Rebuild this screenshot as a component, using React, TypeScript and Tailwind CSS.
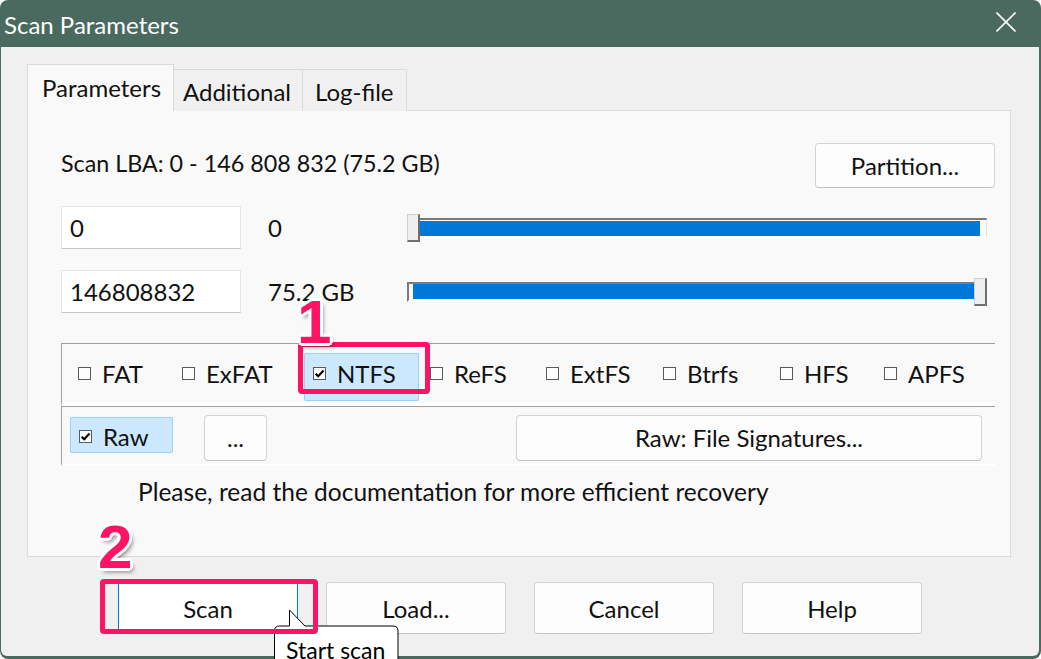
import React from 'react';

function Check({ checked }: { checked?: boolean }) {
  return (
    <span className="w-[13px] h-[13px] shrink-0 border border-[#5a5a5a] bg-[#fcfcfc] flex items-center justify-center">
      {checked && (
        <svg viewBox="0 0 12 12" className="w-[11px] h-[11px]">
          <path d="M1.8 6.2 L4.6 9 L10.4 2.8" stroke="#000" strokeWidth="2.4" fill="none" />
        </svg>
      )}
    </span>
  );
}

function FsItem({ label, width, checked, active }: { label: string; width: string; checked?: boolean; active?: boolean }) {
  return (
    <div className={width}>
      <div
        className={
          'h-[48px] flex items-center gap-[11px] pl-[9px] pb-[7px] rounded-[2px] ' +
          (active ? 'w-[115px] bg-[#cce8ff] shadow-[inset_0_0_0_1px_#99d1ff]' : '')
        }
      >
        <Check checked={checked} />
        <span>{label}</span>
      </div>
    </div>
  );
}

function Btn({ children, className }: { children: React.ReactNode; className?: string }) {
  return (
    <div
      className={
        'flex items-center justify-center bg-[#fdfdfd] border border-[#d3d3d3] border-b-[#c2c2c2] rounded-[4px] ' +
        (className ?? '')
      }
    >
      {children}
    </div>
  );
}

const digit =
  "absolute font-['Liberation_Sans',Arial,sans-serif] font-bold text-[62px] leading-[62px] text-[#ff1464] [text-shadow:-2px_-2px_0_#fff,2px_-2px_0_#fff,-2px_2px_0_#fff,2px_2px_0_#fff,0_-3px_0_#fff,0_3px_0_#fff,-3px_0_0_#fff,3px_0_0_#fff,3px_4px_4px_rgba(0,0,0,0.45)]";

export default function App() {
  return (
    <div className="w-[1041px] h-[659px] bg-white overflow-hidden">
      <div className="relative w-full h-full flex flex-col rounded-[8px] bg-[#4a6a60] pl-[1px] pr-[2px] pb-[3px] font-['Lato','Noto_Sans',sans-serif] text-[24px] text-[#111]">
        {/* title bar */}
        <div className="h-[47px] shrink-0 flex items-center justify-between text-white">
          <span className="pl-[3px] pt-[2px]">Scan Parameters</span>
          <svg viewBox="0 0 20 20" className="w-[20px] h-[20px] mr-[23px] mb-[4px]">
            <path d="M0.5 0.5 L19.5 19.5 M19.5 0.5 L0.5 19.5" stroke="#fff" strokeWidth="1.6" />
          </svg>
        </div>

        {/* body */}
        <div className="flex-1 bg-[#f0f0f0] rounded-b-[6px] flex flex-col pl-[26px] pt-[17px]">
          {/* tabs */}
          <div className="flex items-end h-[47px] relative z-10 -mb-px">
            <div className="w-[147px] h-[47px] bg-[#f9f9f9] border border-b-0 border-[#dadada] flex items-center pl-[14px] pb-[1px]">
              Parameters
            </div>
            <div className="w-[129px] h-[42px] bg-[#f0f0f0] border-t border-r border-[#dadada] flex items-center pl-[9px] pt-[3px]">
              Additional
            </div>
            <div className="w-[104px] h-[42px] bg-[#f0f0f0] border-t border-r border-[#dadada] flex items-center pl-[12px] pt-[3px]">
              Log-file
            </div>
          </div>

          {/* panel */}
          <div className="w-[984px] h-[447px] bg-[#f9f9f9] border border-[#dadada] pl-[33px] pr-[15px] pt-[32px] flex flex-col">
            <div className="h-[45px] flex items-center justify-between">
              <span className="pb-[4px] text-[23.3px]">Scan LBA: 0 - 146 808 832 (75.2 GB)</span>
              <Btn className="w-[180px] h-[45px]">Partition...</Btn>
            </div>

            {/* start row */}
            <div className="mt-[18px] h-[43px] flex items-center">
              <div className="w-[180px] h-[43px] bg-white border border-[#e6e6e6] border-b-[#c4c4c4] flex items-center pl-[8px]">0</div>
              <div className="w-[166px] pl-[27px]">0</div>
              <div className="w-[580px] h-[28px] flex items-center">
                <div className="w-[13px] h-[28px] bg-[#efefef] border border-[#cfcfcf] border-r-2 border-b-2 border-r-[#6f6f6f] border-b-[#6f6f6f]" />
                <div className="flex-1 h-[20px] border-t-2 border-t-[#7a7a7a] border-r border-r-[#e0e0e0] border-b-2 border-b-white pr-[6px] pt-px">
                  <div className="h-[15px] bg-[#0078d7]" />
                </div>
              </div>
            </div>

            {/* end row */}
            <div className="mt-[21px] h-[43px] flex items-center">
              <div className="w-[180px] h-[43px] bg-white border border-[#e6e6e6] border-b-[#c4c4c4] flex items-center pl-[8px]">146808832</div>
              <div className="w-[166px] pl-[27px]">75.2 GB</div>
              <div className="w-[580px] h-[28px] flex items-center">
                <div className="flex-1 h-[20px] border-t-2 border-l-2 border-[#7a7a7a] border-b-2 border-b-white pl-[4px]">
                  <div className="h-[15px] bg-[#0078d7]" />
                </div>
                <div className="w-[13px] h-[28px] bg-[#efefef] border border-[#cfcfcf] border-r-2 border-b-2 border-r-[#6f6f6f] border-b-[#6f6f6f]" />
              </div>
            </div>

            {/* file systems */}
            <div className="mt-[30px] h-[63px] border-t border-l border-[#a0a0a0] border-b-[3px] border-b-white flex pt-[9px] pl-[7px]">
              <FsItem label="FAT" width="w-[104px]" />
              <FsItem label="ExFAT" width="w-[131px]" />
              <FsItem label="NTFS" width="w-[117px]" checked active />
              <FsItem label="ReFS" width="w-[116px]" />
              <FsItem label="ExtFS" width="w-[117px]" />
              <FsItem label="Btrfs" width="w-[117px]" />
              <FsItem label="HFS" width="w-[104px]" />
              <FsItem label="APFS" width="w-[100px]" />
            </div>

            {/* raw */}
            <div className="h-[60px] border-t border-l border-[#a0a0a0] border-b-2 border-b-white flex items-start pt-[8px] pl-[8px] pr-[13px]">
              <div className="mt-[2px] w-[103px] h-[36px] bg-[#cce8ff] shadow-[inset_0_0_0_1px_#99d1ff] rounded-[2px] flex items-center gap-[11px] pl-[9px] pt-[3px]">
                <Check checked />
                <span>Raw</span>
              </div>
              <Btn className="ml-[31px] w-[63px] h-[46px]">...</Btn>
              <Btn className="ml-auto w-[466px] h-[46px]">Raw: File Signatures...</Btn>
            </div>

            <div className="mt-[11px] ml-[77px] leading-[30px] text-[24.5px]">Please, read the documentation for more efficient recovery</div>
          </div>

          {/* buttons */}
          <div className="mt-[25px] ml-[91px] flex gap-[28px]">
            <div className="w-[180px] h-[52px] bg-white border border-[#d3d3d3] border-x-[#0078d4] flex items-center justify-center pt-[2px]">Scan</div>
            <Btn className="w-[180px] h-[52px] pt-[2px]">Load...</Btn>
            <Btn className="w-[180px] h-[52px] pt-[2px]">Cancel</Btn>
            <Btn className="w-[180px] h-[52px] pt-[2px]">Help</Btn>
          </div>
        </div>

        {/* tooltip */}
        <svg className="absolute left-[270px] top-[605px] w-[135px] h-[54px]" viewBox="0 0 135 54">
          <path
            d="M4.5 54 L4.5 26 Q4.5 21 9.5 21 L19.5 21 L19.5 5 L35 21 L123 21 Q128 21 128 26 L128 54"
            fill="#fff"
            stroke="#000"
            strokeWidth="1"
          />
        </svg>
        <span className="absolute left-[286px] top-[636px] leading-[28px] text-[23px] text-black">Start scan</span>

        {/* annotations */}
        <div className="absolute left-[298px] top-[342px] w-[132px] h-[52px] border-[5px] border-[#ff1464] rounded-[4px]" />
        <div className="absolute left-[100px] top-[579px] w-[218px] h-[55px] border-[5px] border-[#ff1464] rounded-[4px]" />
        <span className={digit + ' left-[297px] top-[291px]'}>1</span>
        <span className={digit + ' left-[98px] top-[516px]'}>2</span>
      </div>
    </div>
  );
}
